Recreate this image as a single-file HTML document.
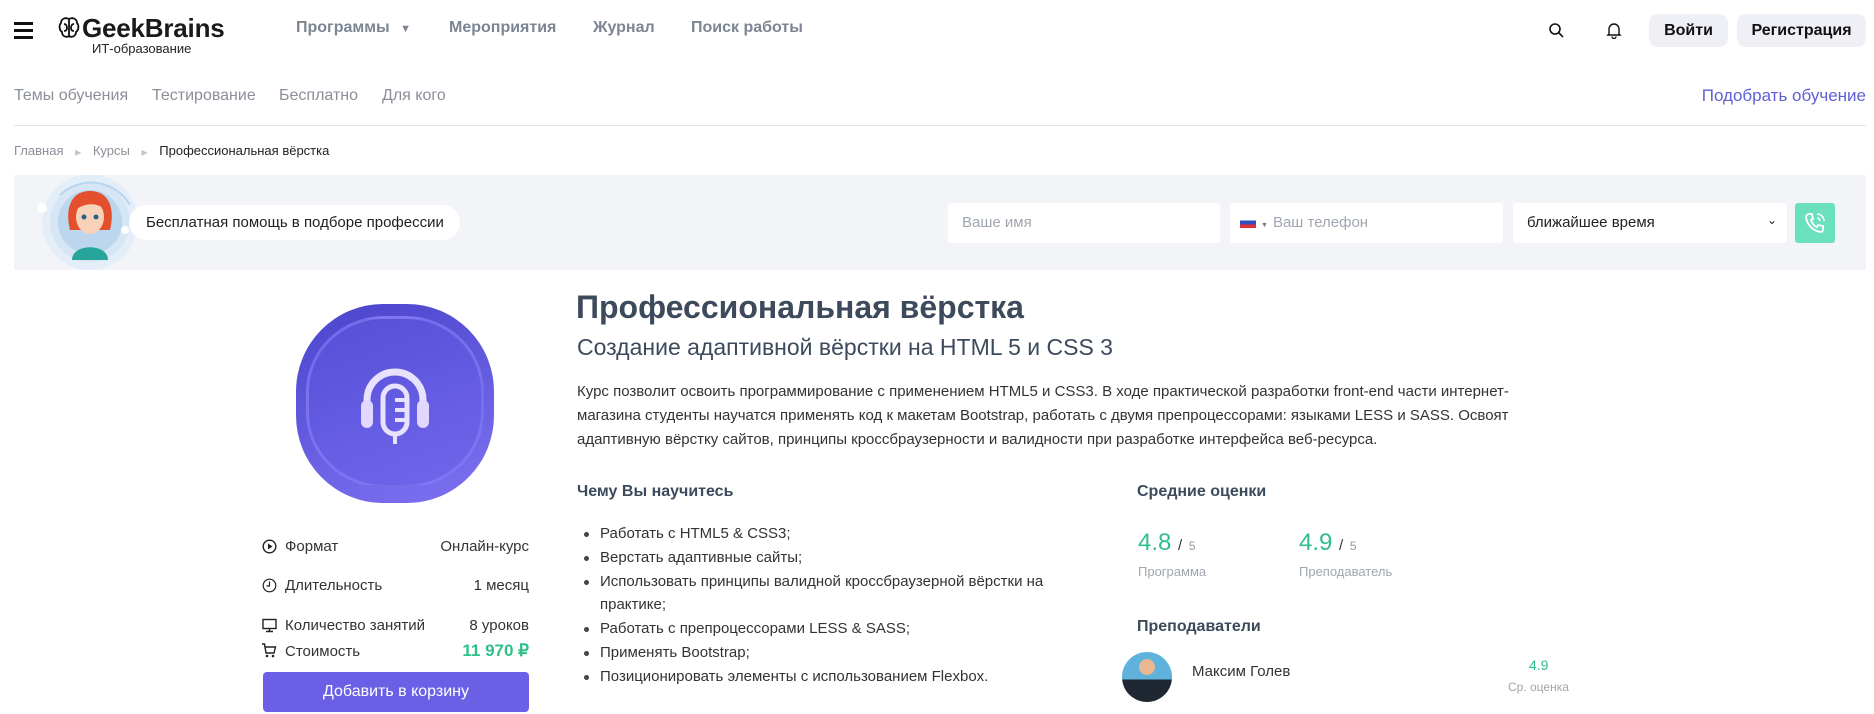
<!DOCTYPE html>
<html><head><meta charset="utf-8"><style>
*{box-sizing:border-box;margin:0;padding:0}
body{width:1874px;height:714px;overflow:hidden;background:#fff;font-family:"Liberation Sans",Arial,sans-serif;color:#2b2b2b;position:relative}
.a{position:absolute;white-space:nowrap}
.nav{font-size:16px;font-weight:bold;color:#7c8591}
.sub{font-size:16px;color:#8a8f98}
.bc{font-size:13px;color:#8a8f98}
.inp{position:absolute;top:203px;height:40px;background:#fff;border-radius:3px;font-size:15px;color:#a0a6b0;padding:11px 14px}
.p{font-size:15px;color:#333;line-height:24px}
.li{font-size:15px;color:#333}
.li:before{content:"";position:absolute;left:-16px;top:7px;width:5px;height:5px;border-radius:50%;background:#444}
.lab{font-size:15px;color:#333}
</style></head><body>
<div class="a" style="left:14px;top:22px;width:19px;height:3px;background:#111;box-shadow:0 7px 0 #111,0 14px 0 #111"></div>
<svg class="a" style="left:58px;top:16px" width="22" height="24" viewBox="0 0 22 24"><path d="M11 3C7 1 3 3 3 7C1 9 1 14 4 16C4 20 8 22 11 20C14 22 18 20 18 16C21 14 21 9 19 7C19 3 15 1 11 3Z M11 3V20 M6 8C8 8 9 10 9 12 M16 8C14 8 13 10 13 12 M6 15C8 15 9 14 9 12 M16 15C14 15 13 14 13 12" fill="none" stroke="#111" stroke-width="1.8"/></svg>
<div class="a" style="left:82px;top:13px;font-size:26px;font-weight:bold;color:#1a1a1a;letter-spacing:-0.2px">GeekBrains</div>
<div class="a" style="left:92px;top:41px;font-size:13px;color:#222">ИТ-образование</div>
<div class="a nav" style="left:296px;top:19px">Программы <span style="font-size:11px;margin-left:6px">▼</span></div>
<div class="a nav" style="left:449px;top:19px">Мероприятия</div>
<div class="a nav" style="left:593px;top:19px">Журнал</div>
<div class="a nav" style="left:691px;top:19px">Поиск работы</div>
<svg class="a" style="left:1548px;top:22px" width="16" height="16" viewBox="0 0 16 16"><circle cx="7" cy="7" r="5" fill="none" stroke="#111" stroke-width="1.6"/><path d="M11 11L15 15" stroke="#111" stroke-width="1.6"/></svg>
<svg class="a" style="left:1606px;top:21px" width="16" height="18" viewBox="0 0 16 18"><path d="M3 13V8A5 5 0 0 1 13 8V13L14 14H2Z M6 15.5A2 2 0 0 0 10 15.5" fill="none" stroke="#111" stroke-width="1.4"/></svg>
<div class="a" style="left:1649px;top:14px;width:79px;height:33px;background:#eef0f5;border-radius:9px;font-size:16px;font-weight:bold;color:#111;text-align:center;line-height:33px">Войти</div>
<div class="a" style="left:1737px;top:14px;width:129px;height:33px;background:#eef0f5;border-radius:9px;font-size:16px;font-weight:bold;color:#111;text-align:center;line-height:33px">Регистрация</div>
<div class="a sub" style="left:14px;top:87px">Темы обучения</div>
<div class="a sub" style="left:152px;top:87px">Тестирование</div>
<div class="a sub" style="left:279px;top:87px">Бесплатно</div>
<div class="a sub" style="left:382px;top:87px">Для кого</div>
<div class="a" style="right:8px;top:86px;font-size:17px;color:#5f5fd6">Подобрать обучение</div>
<div class="a" style="left:14px;top:125px;width:1852px;height:1px;background:#e0e2e6"></div>
<div class="a bc" style="left:14px;top:143px">Главная <span style="font-size:8px;color:#c0c4cc;margin:0 8px">▶</span> Курсы <span style="font-size:8px;color:#c0c4cc;margin:0 8px">▶</span> <span style="color:#222">Профессиональная вёрстка</span></div>
<div class="a" style="left:14px;top:175px;width:1852px;height:95px;background:#f3f4f8"></div>
<svg class="a" style="left:30px;top:175px" width="130" height="95" viewBox="0 0 130 95">
<circle cx="60" cy="47" r="48" fill="#e4eef8"/><circle cx="60" cy="47" r="40" fill="#d6e6f4"/><circle cx="60" cy="47" r="32" fill="#bcd6ee"/>
<path d="M30 20A45 45 0 0 1 100 30" stroke="#b8d6f0" stroke-width="2" fill="none"/>
<circle cx="12" cy="33" r="5" fill="#fff"/>
<path d="M40 55C35 35 40 16 60 16C80 16 85 35 80 55Z" fill="#e4502e"/>
<ellipse cx="60" cy="42" rx="14" ry="17" fill="#f7d2b8"/>
<path d="M44 36C48 22 72 20 76 36C70 28 56 26 44 36Z" fill="#e4502e"/>
<circle cx="54" cy="42" r="2.5" fill="#2b5f8a"/><circle cx="66" cy="42" r="2.5" fill="#2b5f8a"/>
<path d="M42 85C42 68 78 68 78 85Z" fill="#27a59a"/>
<circle cx="95" cy="55" r="4" fill="#fff"/>
</svg>
<div class="a" style="left:129px;top:205px;width:331px;height:35px;background:#fff;border-radius:18px;font-size:15px;color:#222;padding:9px 0 0 17px">Бесплатная помощь в подборе профессии</div>
<div class="inp" style="left:948px;width:272px">Ваше имя</div>
<div class="inp" style="left:1230px;width:273px;padding-left:10px"><span style="display:inline-block;width:16px;height:11px;vertical-align:-1px;background:linear-gradient(#fff 33%,#2f4fc0 33% 66%,#d33 66%)"></span><span style="font-size:7px;color:#777;margin:0 5px">▼</span>Ваш телефон</div>
<div class="inp" style="left:1513px;width:274px;color:#222">ближайшее время<span style="position:absolute;right:10px;top:10px;font-size:12px">⌄</span></div>
<div class="a" style="left:1795px;top:203px;width:40px;height:40px;background:#6be0bd;border-radius:3px"></div>
<svg class="a" style="left:1803px;top:211px" width="24" height="24" viewBox="0 0 24 24"><path d="M6 3L9 3L10 8L8 9C9 12 11 15 14 16L15 14L20 15L20 19C20 20 19 21 18 21C10 20 4 14 3 6C3 5 4 3 6 3Z" fill="none" stroke="#fff" stroke-width="1.8"/><path d="M14 3A7 7 0 0 1 21 10M14 7A3 3 0 0 1 17 10" fill="none" stroke="#fff" stroke-width="1.6"/></svg>
<div class="a" style="left:296px;top:304px;width:198px;height:199px;border-radius:44%;background:linear-gradient(160deg,#4a44cc,#7d72f2)"></div>
<div class="a" style="left:306px;top:316px;width:178px;height:172px;border-radius:44%;border:3px solid rgba(150,140,255,.45);background:linear-gradient(160deg,#5550d6,#7166ec)"></div>
<svg class="a" style="left:355px;top:360px" width="80" height="90" viewBox="0 0 80 90"><path d="M12 50V40A28 28 0 0 1 68 40V50" fill="none" stroke="#e8e2ff" stroke-width="7"/><rect x="6" y="40" width="12" height="28" rx="6" fill="#e0d8ff"/><rect x="62" y="40" width="12" height="28" rx="6" fill="#e0d8ff"/><rect x="28" y="26" width="24" height="48" rx="12" fill="none" stroke="#e8e2ff" stroke-width="5"/><path d="M40 74V84M40 40H50M40 50H50M40 60H50" stroke="#e8e2ff" stroke-width="4"/></svg>
<svg class="a" style="left:262px;top:539px" width="15" height="15" viewBox="0 0 15 15"><circle cx="7.5" cy="7.5" r="6.3" fill="none" stroke="#222" stroke-width="1.4"/><path d="M6 4.5L10.5 7.5L6 10.5Z" fill="#222"/></svg>
<div class="a lab" style="left:285px;top:538px">Формат</div><div class="a lab" style="right:1345px;top:538px">Онлайн-курс</div>
<svg class="a" style="left:262px;top:578px" width="15" height="15" viewBox="0 0 15 15"><circle cx="7.5" cy="7.5" r="6.3" fill="none" stroke="#222" stroke-width="1.2"/><path d="M7.5 3.5V8H4.5" fill="none" stroke="#222" stroke-width="1.2"/></svg>
<div class="a lab" style="left:285px;top:577px">Длительность</div><div class="a lab" style="right:1345px;top:577px">1 месяц</div>
<svg class="a" style="left:262px;top:618px" width="15" height="15" viewBox="0 0 15 15"><rect x="1" y="1.5" width="13" height="9" fill="none" stroke="#222" stroke-width="1.4"/><path d="M7.5 10.5V13.5M4 13.5H11" stroke="#222" stroke-width="1.4"/></svg>
<div class="a lab" style="left:285px;top:617px">Количество занятий</div><div class="a lab" style="right:1345px;top:617px">8 уроков</div>
<svg class="a" style="left:261px;top:643px" width="16" height="15" viewBox="0 0 16 15"><path d="M1 1H3.5L5 10H13L14.5 4H4.5" fill="none" stroke="#222" stroke-width="1.4"/><circle cx="6" cy="13" r="1.3" fill="#222"/><circle cx="12" cy="13" r="1.3" fill="#222"/></svg>
<div class="a lab" style="left:285px;top:643px">Стоимость</div><div class="a" style="right:1345px;top:641px;font-size:17px;font-weight:bold;color:#2fc08a">11 970 ₽</div>
<div class="a" style="left:263px;top:672px;width:266px;height:40px;background:#6b5fe6;border-radius:4px;color:#fff;font-size:16px;text-align:center;line-height:40px">Добавить в корзину</div>
<div class="a" style="left:576px;top:289px;font-size:32px;font-weight:bold;color:#3c4a5b">Профессиональная вёрстка</div>
<div class="a" style="left:577px;top:334px;font-size:23px;color:#3c4a5b">Создание адаптивной вёрстки на HTML 5 и CSS 3</div>
<div class="a p" style="left:577px;top:380px">Курс позволит освоить программирование с применением HTML5 и CSS3. В ходе практической разработки front-end части интернет-<br>магазина студенты научатся применять код к макетам Bootstrap, работать с двумя препроцессорами: языками LESS и SASS. Освоят<br>адаптивную вёрстку сайтов, принципы кроссбраузерности и валидности при разработке интерфейса веб-ресурса.</div>
<div class="a" style="left:577px;top:483px;font-size:16px;font-weight:bold;color:#3c4a5b">Чему Вы научитесь</div>
<div class="a li" style="left:600px;top:525px">Работать с HTML5 &amp; CSS3;</div>
<div class="a li" style="left:600px;top:549px">Верстать адаптивные сайты;</div>
<div class="a li" style="left:600px;top:573px">Использовать принципы валидной кроссбраузерной вёрстки на</div>
<div class="a" style="left:600px;top:596px;font-size:15px;color:#333">практике;</div>
<div class="a li" style="left:600px;top:620px">Работать с препроцессорами LESS &amp; SASS;</div>
<div class="a li" style="left:600px;top:644px">Применять Bootstrap;</div>
<div class="a li" style="left:600px;top:668px">Позиционировать элементы с использованием Flexbox.</div>
<div class="a" style="left:1137px;top:483px;font-size:16px;font-weight:bold;color:#3c4a5b">Средние оценки</div>
<div class="a" style="left:1138px;top:529px;font-size:24px;color:#2fc08a">4.8 <span style="color:#333;font-size:15px">/</span> <span style="color:#999;font-size:12px">5</span></div>
<div class="a" style="left:1138px;top:564px;font-size:13px;color:#a0a6ae">Программа</div>
<div class="a" style="left:1299px;top:529px;font-size:24px;color:#2fc08a">4.9 <span style="color:#333;font-size:15px">/</span> <span style="color:#999;font-size:12px">5</span></div>
<div class="a" style="left:1299px;top:564px;font-size:13px;color:#a0a6ae">Преподаватель</div>
<div class="a" style="left:1137px;top:618px;font-size:16px;font-weight:bold;color:#3c4a5b">Преподаватели</div>
<div class="a" style="left:1122px;top:652px;width:50px;height:50px;border-radius:50%;background:radial-gradient(circle at 50% 30%,#e8b890 0 18%,transparent 19%),linear-gradient(#5eb2dc 55%,#1f2733 55%)"></div>
<div class="a" style="left:1192px;top:663px;font-size:15px;color:#333">Максим Голев</div>
<div class="a" style="left:1529px;top:657px;font-size:14px;color:#2fc08a">4.9</div>
<div class="a" style="left:1508px;top:680px;font-size:12px;color:#a0a6ae">Ср. оценка</div>
</body></html>
